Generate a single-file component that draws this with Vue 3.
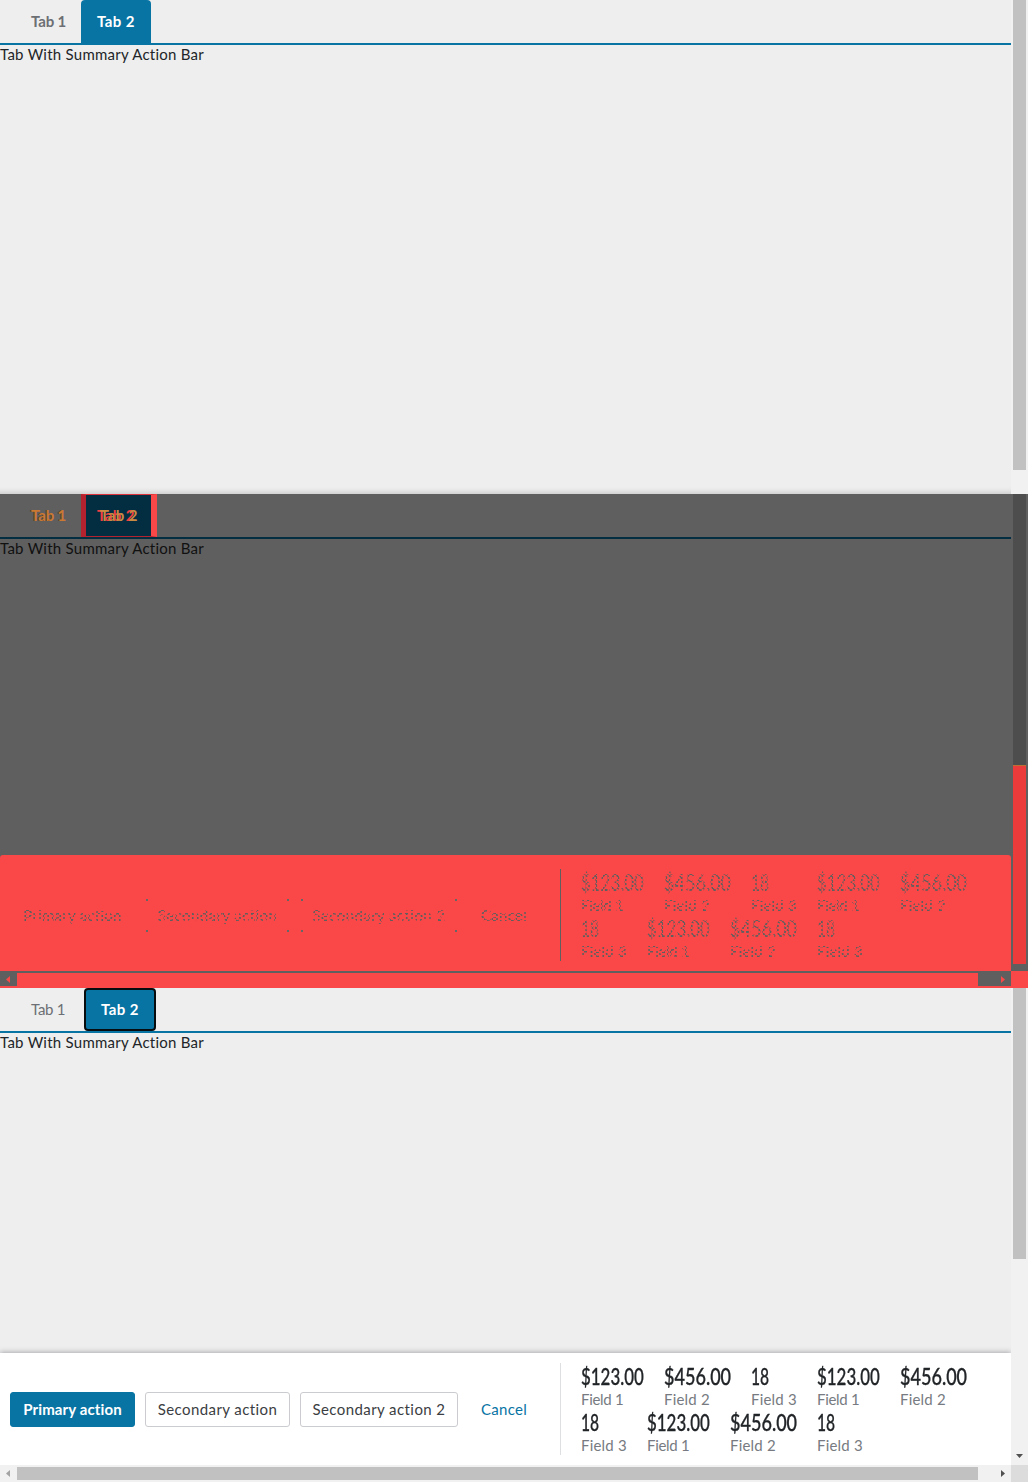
<script setup>
const panels = ['before', 'diff', 'after']
const fields = [
  { value: '$123.00', label: 'Field 1', kind: 'one' },
  { value: '$456.00', label: 'Field 2', kind: 'two' },
  { value: '18', label: 'Field 3', kind: 'three' },
]
const rows = [
  [...fields, fields[0], fields[1]],
  [fields[2], fields[0], fields[1], fields[2]],
]
</script>

<template>
  <main class="comparison">
    <section v-for="panel in panels" :key="panel" class="panel" :class="panel">
      <div class="page">
        <nav class="tabs">
          <span class="tab first"><span class="tab-text">Tab 1</span></span>
          <span class="tab second"><span class="tab-text">Tab 2</span></span>
        </nav>
        <div class="body"><span class="description">Tab With Summary Action Bar</span></div>
        <footer v-if="panel !== 'before'" class="summary">
          <div class="actions">
            <span class="button primary"><span class="grain">Primary action</span></span>
            <span class="button secondary"><span class="grain">Secondary action</span></span>
            <span class="button wide"><span class="grain">Secondary action 2</span></span>
            <span class="cancel"><span class="grain">Cancel</span></span>
          </div>
          <div class="fields">
            <div v-for="(row, r) in rows" :key="r" class="row">
              <div v-for="(field, i) in row" :key="i" class="field" :class="field.kind">
                <span class="value grain">{{ field.value }}</span>
                <span class="label grain">{{ field.label }}</span>
              </div>
            </div>
          </div>
        </footer>
        <div v-if="panel !== 'before'" class="hscroll">
          <svg class="end" width="17" height="17"><path d="M10 5 6 8.5 10 12Z" /></svg>
          <i class="hthumb"></i>
          <svg class="end last" width="17" height="17"><path d="M7 5 11 8.5 7 12Z" /></svg>
        </div>
      </div>
      <div class="vscroll">
        <i class="vthumb"></i>
        <i v-if="panel === 'diff'" class="changed"></i>
        <svg v-if="panel === 'after'" class="down" width="17" height="17"><path d="M5 6H12L8.5 10Z" /></svg>
        <i v-if="panel !== 'before'" class="corner"></i>
      </div>
    </section>
  </main>
</template>

<style>
body { margin: 0; }
</style>

<style scoped>
* { box-sizing: border-box; }
.comparison { width: 1028px; font: 15px/20px Lato, sans-serif; color: #222528; }
.panel { display: flex; height: 494px; background: #eee; overflow: hidden; }
.page { display: flex; flex-direction: column; width: 1011px; }
.before .page { box-shadow: inset 0 -7px 5px -5px #ccc; }
.tabs { display: flex; height: 45px; flex: none; padding-left: 16px; border-bottom: 2px solid #0874a4; }
.tab { height: 43px; padding: 11px 0 0 15px; font-weight: 700; white-space: nowrap; }
.first { width: 65px; color: #6c6f73; }
.second { width: 70px; padding-left: 16px; border-radius: 4px 4px 0 0; background: #0874a4; color: #fff; }
.tab-text { letter-spacing: -.15px; }
.second .tab-text { letter-spacing: .4px; }
.body { flex: 1; min-height: 0; line-height: 18px; white-space: nowrap; }
.description { letter-spacing: .25px; }
.after .first { width: 68px; font-weight: 400; }
.after .first .tab-text { letter-spacing: -.25px; }
.after .second { width: 72px; padding: 9px 0 0 15px; border: 2px solid #070c0f; border-radius: 4px; }
.summary { display: flex; flex: none; height: 112px; padding: 10px 0; background: #fff; box-shadow: 0 -1px 5px #aaaab0; }
.actions { display: flex; width: 561px; height: 92px; align-items: center; gap: 10px; padding: 1px 0 0 10px; border-right: 1px solid #dedfe0; }
.button { display: flex; align-items: center; justify-content: center; height: 35px; padding-bottom: 2px; border: 1px solid #cbccd0; border-radius: 3px; white-space: nowrap; color: #3b3e42; letter-spacing: .42px; }
.primary { width: 125px; background: #0874a4; border-color: #0874a4; color: #fff; font-weight: 700; letter-spacing: .12px; }
.secondary { width: 145px; }
.wide { width: 158px; }
.cancel { margin-left: 13px; padding-bottom: 2px; color: #0874a4; letter-spacing: .3px; }
.fields { display: flex; flex-direction: column; padding-left: 20px; }
.row { display: flex; gap: 20px; height: 46px; }
.field { display: flex; flex-direction: column; white-space: nowrap; }
.one { width: 63px; }
.two { width: 67px; }
.three { width: 46px; }
.value { width: max-content; height: 28px; font-size: 23px; line-height: 27px; font-weight: 500; -webkit-text-stroke: .3px currentColor; transform: scaleX(.735); transform-origin: left; }
.two .value { transform: scaleX(.785); }
.three .value { transform: scaleX(.68); }
.label { width: max-content; height: 18px; line-height: 16px; color: #777b81; letter-spacing: .2px; }
.one .label { letter-spacing: -.3px; }
.hscroll { display: flex; flex: none; height: 17px; padding: 2px 0; background: #f1f1f1; }
.end { display: block; flex: none; margin-top: -2px; fill: #a3a3a3; }
.last { margin-left: auto; fill: #505050; }
.hthumb { width: 961px; height: 13px; background: #c1c1c1; }
.vscroll { display: flex; flex-direction: column; align-items: center; width: 17px; background: #f1f1f1; }
.vthumb { width: 13px; height: 470px; background: #c1c1c1; }
.after .vthumb { height: 271px; }
.down { display: block; margin-top: auto; fill: #505050; }
.corner { width: 17px; height: 17px; background: #dcdcdc; }

.diff { background: #5f5f5f; color: #111; }
.diff .tabs { border-color: #032e41; }
.diff .first { color: #c97932; }
.diff .first .tab-text { text-shadow: -1px 0 #553e31; }
.diff .second { width: 76px; height: 43px; border: solid #b3232f; border-width: 1px 6px 1px 5px; border-top-color: #db3339; border-right-color: #fa4747; border-radius: 0; padding: 10px 0 0 14px; background: #032e41; color: #c88b42; }
.diff .second .tab-text { text-shadow: -3px 0 #ef3d43; }
.diff .summary { height: 116px; padding: 14px 0 10px; background: #fa4747; border-radius: 3px 3px 0 0; box-shadow: none; }
.diff .actions { border-color: #5f5f5f; }
.diff .button { border-color: transparent; }
.diff .secondary, .diff .wide {
  background: radial-gradient(circle, #666 1px, transparent 1.5px) -1px -1px / 4px 4px no-repeat,
    radial-gradient(circle, #666 1px, transparent 1.5px) calc(100% + 1px) -1px / 4px 4px no-repeat,
    radial-gradient(circle, #666 1px, transparent 1.5px) -1px calc(100% + 1px) / 4px 4px no-repeat,
    radial-gradient(circle, #666 1px, transparent 1.5px) calc(100% + 1px) calc(100% + 1px) / 4px 4px no-repeat;
}
.diff .primary { background: none; }
.diff .grain { color: #5f5f5f; font-weight: 400; mask-image: repeating-conic-gradient(#000 0 25%, transparent 0 50%); mask-size: 6px 4px; -webkit-text-stroke: .2px #5f5f5f; }
.diff .primary .grain { letter-spacing: .25px; }
.diff .hscroll { padding: 0; background: #fa4747; border-top: 2px solid #5f5f5f; }
.diff .end { height: 13px; margin: 0; background: #5f5f5f; fill: #fa4747; }
.diff .end path { transform: translateY(-2px); }
.diff .last { width: 33px; }
.diff .last path { transform: translate(16px, -2px); }
.diff .hthumb { height: 15px; background: #fa4747; }
.diff .vscroll { background: #5f5f5f; }
.diff .vthumb { height: 271px; background: #4d4d4d; }
.diff .changed { width: 13px; height: 199px; background: #eb3b3b; border-top: 1px solid #bb7034; }
.diff .corner { margin-top: auto; background: #fa4747; }
</style>
